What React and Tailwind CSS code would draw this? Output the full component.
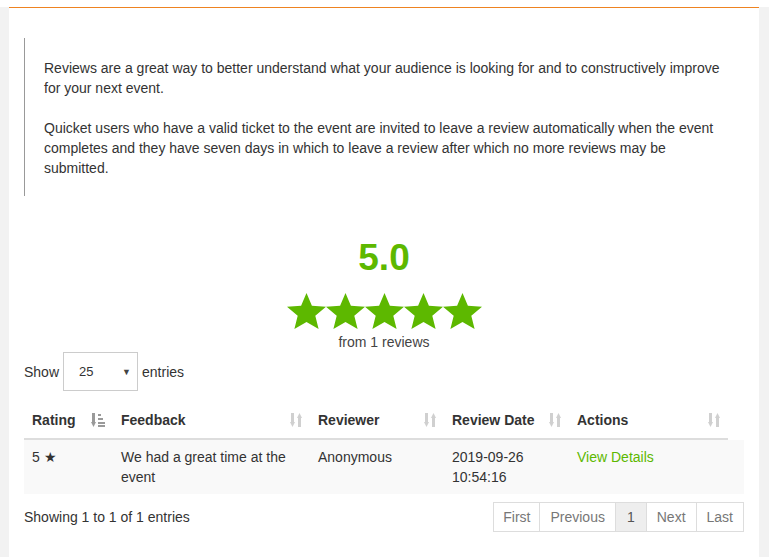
import React from "react";

const GREEN = "text-[#5db800]";

const Star = () => (
  <svg width="39" height="36" viewBox="0 0 39 37" preserveAspectRatio="none" className="block">
    <polygon
      fill="#5db800"
      points="19.5,0 24.9,13.1 39,14.2 28.3,23.3 31.6,37 19.5,29.7 7.4,37 10.7,23.3 0,14.2 14.1,13.1"
    />
  </svg>
);

// both arrows, faint (unsorted column)
const SortIcon = () => (
  <svg width="12" height="14" viewBox="0 0 12 14" className="block">
    <g fill="#d0d0d0">
      <rect x="1" y="0" width="3" height="10" />
      <polygon points="0,9 5,9 2.5,14" />
      <rect x="8" y="4" width="3" height="10" />
      <polygon points="7,5 12,5 9.5,0" />
    </g>
  </svg>
);

// sorted column: arrow down + bars
const SortActive = () => (
  <svg width="14" height="14" viewBox="0 0 14 14" className="block">
    <g fill="#9a9a9a">
      <rect x="1" y="0" width="3" height="10" />
      <polygon points="0,9 5,9 2.5,14" />
      <rect x="7" y="1" width="3" height="2" />
      <rect x="7" y="5" width="5" height="2" />
      <rect x="7" y="9" width="7" height="2" />
      <rect x="7" y="12" width="7" height="2" />
    </g>
  </svg>
);

const cols = "grid grid-cols-[89px_197px_134px_125px_159px]";

const headers = [
  { label: "Rating", active: true },
  { label: "Feedback" },
  { label: "Reviewer" },
  { label: "Review Date" },
  { label: "Actions" },
];

export default function App() {
  return (
    <div className="min-h-[557px] bg-[#f2f2f2] font-['Liberation_Sans',Arial,sans-serif] text-[14px] leading-[20px] text-[#333]">
      <div className="ml-[9px] w-[750px] min-h-[550px] bg-white border-t border-[#ee8321] mt-[7px] px-[15px]">
        {/* intro */}
        <div className="mt-[30px] border-l border-[#999] pl-[19px] pr-[20px] pt-[20px] pb-[18px]">
          <p>
            Reviews are a great way to better understand what your audience is looking for and to
            constructively improve for your next event.
          </p>
          <p className="mt-[20px]">
            Quicket users who have a valid ticket to the event are invited to leave a review
            automatically when the event completes and they have seven days in which to leave a
            review after which no more reviews may be submitted.
          </p>
        </div>

        {/* score */}
        <div className="flex flex-col items-center mt-[42px]">
          <div className={`text-[37px] leading-[40px] font-bold ${GREEN}`}>5.0</div>
          <div className="flex mt-[15px]">
            <Star />
            <Star />
            <Star />
            <Star />
            <Star />
          </div>
          <div className="mt-[3px] text-[#444]">from 1 reviews</div>
        </div>

        {/* length */}
        <div className="flex items-center gap-[4px]">
          <span>Show</span>
          <div className="w-[75px] h-[39px] border border-[#ccc] flex items-center justify-between pl-[15px] pr-[6px] text-[13px]">
            <span>25</span>
            <span className="text-[9px] text-[#444]">▼</span>
          </div>
          <span>entries</span>
        </div>

        {/* table */}
        <div className="mt-[11px]">
          <div className={`${cols} w-[704px] border-b-2 border-[#ddd] font-bold`}>
            {headers.map((h) => (
              <div key={h.label} className="flex items-center justify-between p-[8px]">
                <span>{h.label}</span>
                {h.active ? <SortActive /> : <SortIcon />}
              </div>
            ))}
          </div>
          <div className="grid grid-cols-[89px_197px_134px_125px_175px] bg-[#f9f9f9]">
            <div className="px-[8px] py-[7px]">5 ★</div>
            <div className="px-[8px] py-[7px]">We had a great time at the event</div>
            <div className="px-[8px] py-[7px]">Anonymous</div>
            <div className="px-[8px] py-[7px]">2019-09-26 10:54:16</div>
            <div className={`px-[8px] py-[7px] ${GREEN}`}>View Details</div>
          </div>
        </div>

        {/* footer */}
        <div className="flex items-center justify-between mt-[8px]">
          <span>Showing 1 to 1 of 1 entries</span>
          <div className="flex text-[#777]">
            <span className="px-[9px] py-[4px] border border-[#ddd]">First</span>
            <span className="px-[10px] py-[4px] border border-l-0 border-[#ddd]">Previous</span>
            <span className="px-[11px] py-[4px] border border-l-0 border-[#ddd] bg-[#eee] text-[#555]">1</span>
            <span className="px-[10px] py-[4px] border border-l-0 border-[#ddd]">Next</span>
            <span className="px-[10px] py-[4px] border border-l-0 border-[#ddd]">Last</span>
          </div>
        </div>
      </div>
    </div>
  );
}
